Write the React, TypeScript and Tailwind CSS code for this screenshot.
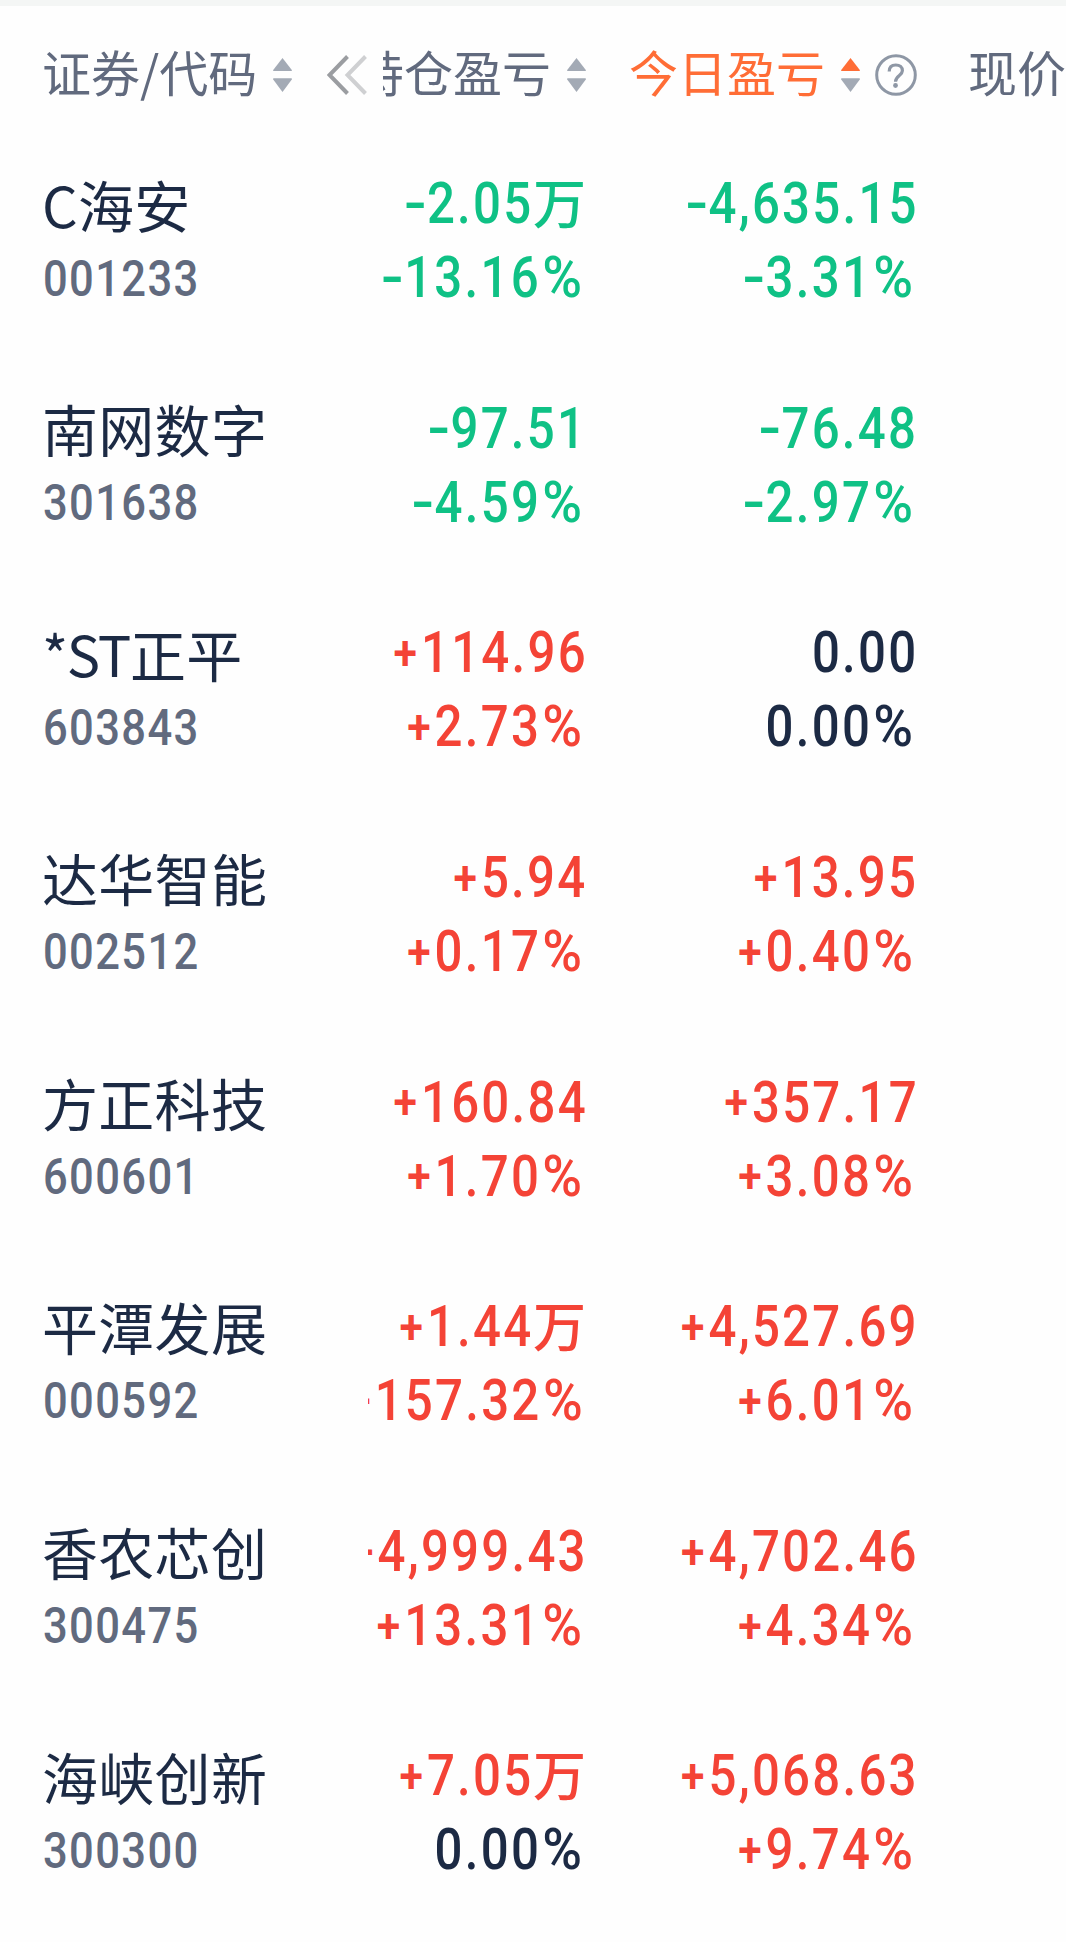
import clsx from 'clsx'

type Holding = {
  name: string
  code: string
  total: string
  totalRate: string
  today: string
  todayRate: string
}

const holdings: Holding[] = [
  { name: 'C海安', code: '001233', total: '-2.05万', totalRate: '-13.16%', today: '-4,635.15', todayRate: '-3.31%' },
  { name: '南网数字', code: '301638', total: '-97.51', totalRate: '-4.59%', today: '-76.48', todayRate: '-2.97%' },
  { name: '*ST正平', code: '603843', total: '+114.96', totalRate: '+2.73%', today: '0.00', todayRate: '0.00%' },
  { name: '达华智能', code: '002512', total: '+5.94', totalRate: '+0.17%', today: '+13.95', todayRate: '+0.40%' },
  { name: '方正科技', code: '600601', total: '+160.84', totalRate: '+1.70%', today: '+357.17', todayRate: '+3.08%' },
  { name: '平潭发展', code: '000592', total: '+1.44万', totalRate: '+157.32%', today: '+4,527.69', todayRate: '+6.01%' },
  { name: '香农芯创', code: '300475', total: '+4,999.43', totalRate: '+13.31%', today: '+4,702.46', todayRate: '+4.34%' },
  { name: '海峡创新', code: '300300', total: '+7.05万', totalRate: '0.00%', today: '+5,068.63', todayRate: '+9.74%' }
]

const getColor = (sign: string) => {
  switch (sign) {
    case '+':
      return 'text-[#f44336]'
    case '-':
      return 'text-[#0fc185]'
    default:
      return 'text-[#1c2a44]'
  }
}

function SortIcon({ active = false }: { active?: boolean }) {
  return (
    <svg viewBox="0 0 19 34" className="w-[19px] h-[34px] shrink-0">
      <path d="M9.5 0 L19 12.2 Q19 13 18.2 13 H0.8 Q0 13 0 12.2 Z" fill={active ? '#ff6d36' : '#a3aab5'} />
      <path d="M9.5 34 L19 21.2 Q19 20.3 18.2 20.3 H0.8 Q0 20.3 0 21.2 Z" fill="#a3aab5" />
    </svg>
  )
}

function Amount({ value }: { value: string }) {
  const [, sign, digits, unit] = value.match(/^([+-]?)([\d.,]+)(.?)$/) ?? ['', '', value, '']

  return (
    <div className={clsx('flex h-[74px] items-center justify-end leading-none whitespace-nowrap', getColor(sign))}>
      <span
        className={clsx(
          'flex items-center origin-right scale-x-[0.87] font-[Roboto,sans-serif] text-[56.5px] font-medium translate-y-[1px]',
          unit === '' && '-mr-[1.5px]'
        )}
      >
        {sign === '+' && <span className="w-[33px] pl-[1.5px] text-[49px] font-semibold translate-y-[-1px]">+</span>}
        {sign === '-' && <span className="w-[27px] text-center scale-x-[1.35]">-</span>}
        <span className="tracking-[2.6px]">{digits}</span>
        {unit === '%' && <span className="w-[51.5px] pl-[1.5px] origin-left scale-x-[1.1]">%</span>}
      </span>
      {unit === '万' && (
        <span className="font-['Noto_Sans_CJK_SC',sans-serif] text-[53px] font-medium -translate-y-[2px]">万</span>
      )}
    </div>
  )
}

function StockName({ name }: { name: string }) {
  const isSpecial = name.startsWith('*ST')

  return (
    <div className="flex h-[74px] items-center text-[56px] tracking-[0.3px] text-[#1c2a44]">
      {isSpecial && <span className="tracking-[-1.3px]">*ST</span>}
      <span>{isSpecial ? name.slice(3) : name}</span>
    </div>
  )
}

export default function App() {
  return (
    <div className="w-[1066px] h-[1942px] overflow-hidden bg-[#fefefe] font-['Noto_Sans_CJK_SC',sans-serif]">
      <div className="h-[6px] bg-[#f4f6f5]" />

      {/* Header */}
      <div className="flex h-[137px] items-center text-[49px] leading-none whitespace-nowrap text-[#616a7e]">
        <div className="flex w-[383px] shrink-0 items-center pl-[42px]">
          <span className="w-[231px] -translate-y-[4px]">证券/代码</span>
          <SortIcon />
          <svg viewBox="0 0 40 40" className="ml-[35px] w-[40px] h-[40px]" fill="none" strokeWidth="4">
            <path d="M20.5 1.5 L2.5 20 L20.5 38.5" stroke="#9b9da1" />
            <path d="M38.5 1.5 L20.5 20 L38.5 38.5" stroke="#cfd0d2" />
          </svg>
        </div>
        <div className="flex w-[203px] shrink-0 items-center justify-end overflow-hidden">
          <span className="mr-[16px] py-[10px] -translate-y-[4px]">持仓盈亏</span>
          <SortIcon />
        </div>
        <div className="flex w-[331px] shrink-0 items-center justify-end">
          <span className="mr-[16px] text-[#ff6d36] -translate-y-[4px]">今日盈亏</span>
          <SortIcon active />
          <svg viewBox="0 0 42 42" className="ml-[15px] w-[42px] h-[42px] shrink-0" fill="none" stroke="#8e97a5">
            <circle cx="21" cy="21" r="19.3" strokeWidth="3" />
            <path
              d="M14.2 17.5 C14.2 13.2 16.8 11 20.8 11 C24.8 11 27.4 13.2 27.4 16.8 C27.4 21.5 20.5 21.5 20.5 27.8"
              strokeWidth="3.2"
            />
            <circle cx="20.5" cy="31.5" r="2.4" fill="#8e97a5" stroke="none" />
          </svg>
        </div>
        <span className="ml-[51px] -translate-y-[4px]">现价</span>
      </div>

      {/* Holdings */}
      {holdings.map((item) => (
        <div key={item.code} className="flex h-[224.6px] pt-[23.5px]">
          <div className="w-[368px] shrink-0 pl-[42px] leading-none whitespace-nowrap">
            <StockName name={item.name} />
            <div className="flex h-[74px] items-center text-[#616a7e]">
              <span className="ml-[1px] origin-left scale-x-[0.87] font-[Roboto,sans-serif] text-[50px] font-medium tracking-[1.6px] translate-y-[1px]">
                {item.code}
              </span>
            </div>
          </div>
          <div className="w-[218px] shrink-0 overflow-hidden">
            <Amount value={item.total} />
            <Amount value={item.totalRate} />
          </div>
          <div className="w-[331px] shrink-0">
            <Amount value={item.today} />
            <Amount value={item.todayRate} />
          </div>
        </div>
      ))}
    </div>
  )
}
